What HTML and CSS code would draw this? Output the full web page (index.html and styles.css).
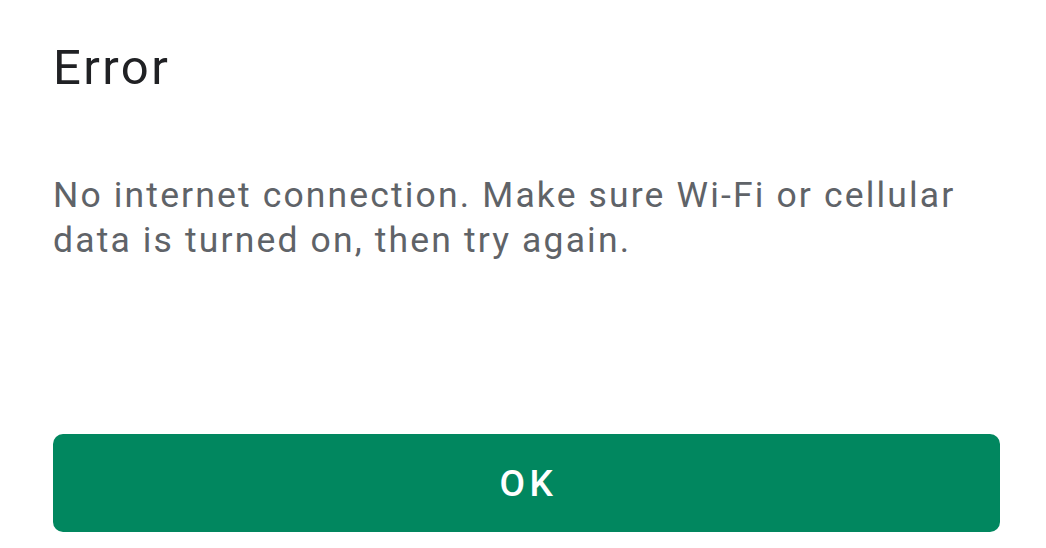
FILE: index.html
```html
<!DOCTYPE html>
<html>
<head>
<meta charset="utf-8">
<link rel="stylesheet" href="styles.css">
</head>
<body>
<div class="dialog">
  <h1 class="title">Error</h1>
  <p class="message">No internet connection. Make sure Wi-Fi or cellular data is turned on, then try again.</p>
  <button class="ok">OK</button>
</div>
</body>
</html>
```
FILE: styles.css
```css
html, body {
  margin: 0;
  padding: 0;
  background: #ffffff;
}
.dialog {
  width: 1046px;
  height: 548px;
  box-sizing: border-box;
  padding: 40px 46px 0 53px;
  display: flex;
  flex-direction: column;
  font-family: Roboto, "Noto Sans", sans-serif;
}
.title {
  margin: 0;
  font-size: 49px;
  font-weight: 400;
  line-height: 56px;
  letter-spacing: 2.4px;
  color: #202124;
}
.message {
  margin: 77px 0 0 0;
  font-size: 35.5px;
  line-height: 45px;
  color: #5f6368;
  letter-spacing: 2.15px;
  max-width: 930px;
}
.ok {
  margin-top: auto;
  margin-bottom: 16px;
  height: 98px;
  width: 947px;
  border: none;
  border-radius: 10px;
  background: #01875f;
  color: #ffffff;
  font-family: Roboto, "Noto Sans", sans-serif;
  font-size: 37px;
  font-weight: 500;
  letter-spacing: 4.5px;
  padding: 0 0 0 4px;
}
```
